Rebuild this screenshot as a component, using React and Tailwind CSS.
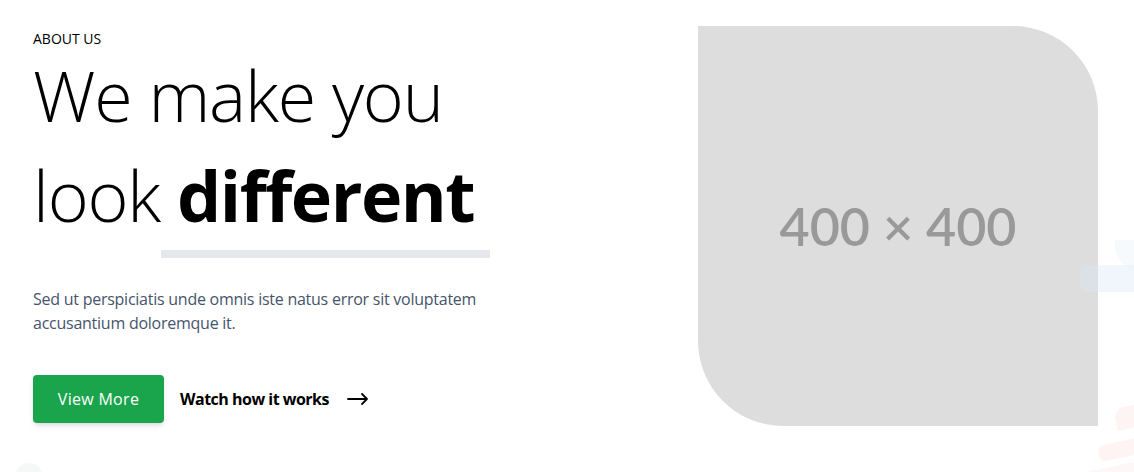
export default function App() {
  return (
    <div className="relative w-[1134px] h-[472px] overflow-hidden bg-white" style={{ fontFamily: '"Open Sans", "Noto Sans", sans-serif' }}>
      <div className="flex justify-between pl-[33px] pr-[36px] pt-[26px]">
        <div className="flex flex-col pt-[5px]">
          <div className="text-[14px] leading-[16px] font-medium text-black uppercase">About us</div>
          <h1 className="mt-[-2px] text-[70px] leading-[100px] font-light text-black tracking-[-1.2px]">
            We make you
            <br />
            look{" "}
            <span className="relative inline-block font-bold tracking-[-1.5px]">
              different
              <span className="absolute left-[-16px] right-[-16px] bottom-[-13px] h-[8px] bg-gray-200"></span>
            </span>
          </h1>
          <p className="mt-[42px] text-[16px] leading-[24px] text-slate-600 tracking-[-0.25px]">
            Sed ut perspiciatis unde omnis iste natus error sit voluptatem
            <br />
            accusantium doloremque it.
          </p>
          <div className="mt-[40px] flex items-center gap-4">
            <button className="w-[131px] h-[48px] rounded bg-[#1aa44b] text-white text-[16px] font-medium tracking-[0.3px] shadow-md">View More</button>
            <a className="flex items-center gap-[18px] text-[16px] font-bold text-black tracking-[-0.5px]">
              Watch how it works
              <svg width="22" height="12" viewBox="0 0 22 12" fill="none" stroke="black" strokeWidth="1.8" strokeLinecap="round" strokeLinejoin="round">
                <path d="M1 6h19M15 1l5 5-5 5" />
              </svg>
            </a>
          </div>
        </div>
        <div className="w-[400px] h-[400px] bg-[#dddddd] rounded-tr-[85px] rounded-bl-[85px] flex items-center justify-center">
          <span className="text-[52px] font-semibold text-[#999999]" style={{ fontFamily: 'Lato, "Open Sans", sans-serif' }}>400 × 400</span>
        </div>
      </div>
      <div className="absolute left-[1080px] top-[265px] w-[80px] h-[27px] rounded-[8px] bg-[#dbe8f8] opacity-40"></div>
      <div className="absolute left-[1115px] top-[240px] w-[40px] h-[30px] rounded-bl-[24px] bg-[#e6effa] opacity-30"></div>
      <div className="absolute left-[1115px] top-[405px] w-[40px] h-[22px] rounded-tl-[10px] bg-[#fdeaea] opacity-50 -rotate-12"></div>
      <div className="absolute left-[1098px] top-[440px] w-[60px] h-[16px] rounded-[6px] bg-[#fdeaea] opacity-50 -rotate-12"></div>
      <div className="absolute left-[1080px] top-[466px] w-[70px] h-[10px] rounded-[6px] bg-[#fdeaea] opacity-40 -rotate-12"></div>
      <div className="absolute left-[15px] top-[463px] w-[28px] h-[28px] rounded-full bg-[#eef4f1] opacity-60"></div>
    </div>
  );
}
